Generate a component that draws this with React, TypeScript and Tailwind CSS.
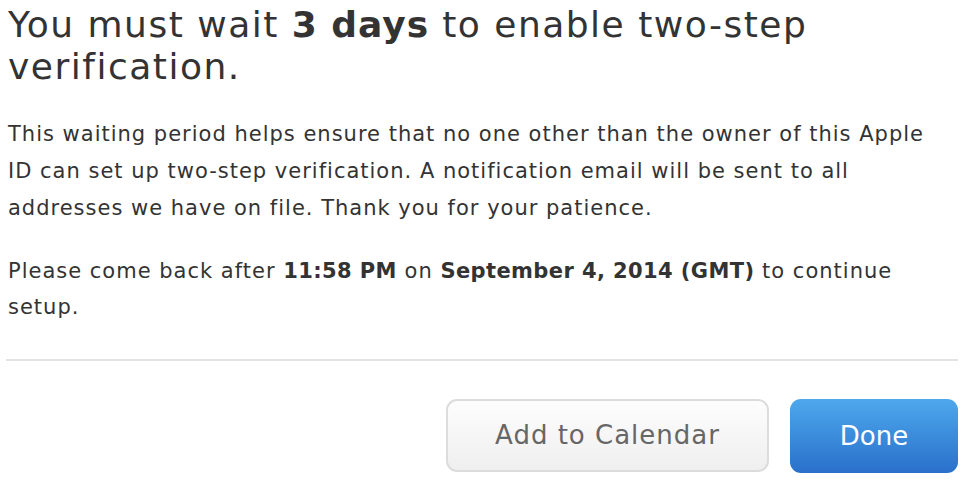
export default function App() {
  return (
    <div className="w-[973px] h-[486px] bg-white overflow-hidden font-['DejaVu_Sans',sans-serif] text-[#333]">
      <div className="pl-[8px] pr-[20px] pt-[4px]">
        <h1 className="text-[36px] leading-[42px] tracking-[1.5px] font-normal">
          You must wait <b className="font-bold tracking-[1px]">3 days</b> to enable two-step verification.
        </h1>
        <p className="mt-[28px] text-[21px] leading-[37px] tracking-[1px]">
          This waiting period helps ensure that no one other than the owner of this Apple ID can set up two-step
          verification. A notification email will be sent to all addresses we have on file. Thank you for your
          patience.
        </p>
        <p className="mt-[26px] text-[21px] leading-[36px] tracking-[1px]">
          Please come back after <b className="tracking-[0.4px]">11:58 PM</b> on{" "}
          <b className="tracking-[0.4px]">September 4, 2014 (GMT)</b> to continue setup.
        </p>
      </div>
      <div className="ml-[6px] mr-[15px] mt-[34px] h-[2px] bg-[#e3e3e3]" />
      <div className="flex justify-end gap-[21px] pr-[15px] pt-[38px]">
        <button className="w-[323px] h-[73px] rounded-[11px] border-2 border-[#dcdcdc] bg-gradient-to-b from-[#fdfdfd] to-[#efefef] text-[26px] text-[#666] tracking-[1px]">
          Add to Calendar
        </button>
        <button className="w-[168px] h-[74px] rounded-[11px] bg-gradient-to-b from-[#4ea8ec] to-[#2a70cb] text-[26px] text-white">
          Done
        </button>
      </div>
    </div>
  );
}
